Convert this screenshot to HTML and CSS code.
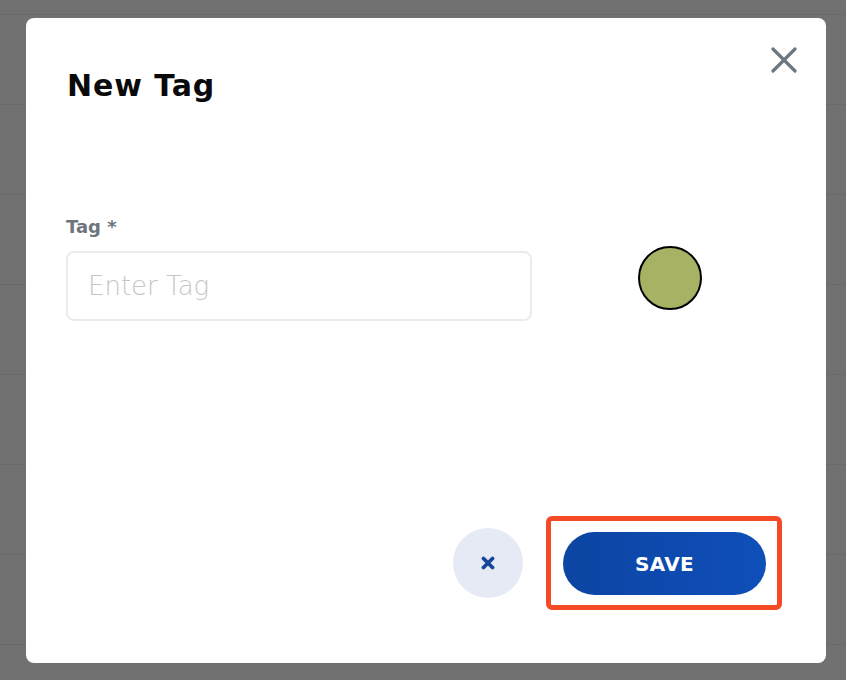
FILE: index.html
```html
<!DOCTYPE html>
<html lang="en">
<head>
<meta charset="utf-8">
<title>New Tag</title>
<link rel="stylesheet" href="styles.css">
</head>
<body>
<div class="backdrop">
  <div class="modal">
    <div class="modal-header">
      <h1 class="modal-title">New Tag</h1>
      <button class="close-btn" aria-label="Close">
        <svg width="26" height="26" viewBox="0 0 26 26"><path d="M2 2 L24 24 M24 2 L2 24" stroke="#6d7780" stroke-width="3.2" stroke-linecap="round" fill="none"/></svg>
      </button>
    </div>
    <div class="form-row">
      <div class="field">
        <label class="field-label">Tag *</label>
        <input class="field-input" type="text" placeholder="Enter Tag">
      </div>
      <div class="swatch"></div>
    </div>
    <div class="modal-footer">
      <button class="cancel-btn" aria-label="Cancel">
        <svg width="14" height="14" viewBox="0 0 14 14"><path d="M2.5 2.5 L11.5 11.5 M11.5 2.5 L2.5 11.5" stroke="#16469a" stroke-width="3.8" stroke-linecap="round" fill="none"/></svg>
      </button>
      <div class="highlight">
        <button class="save-btn">SAVE</button>
      </div>
    </div>
  </div>
</div>
</body>
</html>
```

FILE: styles.css
```css
* { box-sizing: border-box; }
html, body { margin: 0; padding: 0; }
body {
  width: 846px;
  height: 680px;
  overflow: hidden;
  font-family: "DejaVu Sans", "Noto Sans", sans-serif;
  background-color: #717171;
  background-image: repeating-linear-gradient(to bottom, transparent 0, transparent 14px, #6a6a6a 14px, #6a6a6a 15px, transparent 15px, transparent 90px);
}
.backdrop {
  padding: 18px 20px 17px 26px;
}
.modal {
  width: 800px;
  height: 645px;
  background: #ffffff;
  border-radius: 8px;
  display: flex;
  flex-direction: column;
  padding: 0 44px 53px 40px;
}
.modal-header {
  display: flex;
  justify-content: space-between;
  align-items: flex-start;
  height: 85px;
}
.modal-title {
  margin: 51px 0 0 1px;
  font-size: 30px;
  font-weight: 700;
  color: #0a0a0a;
  line-height: 34px;
  letter-spacing: 0.9px;
}
.close-btn {
  margin: 29px -15px 0 0;
  width: 26px;
  height: 26px;
  padding: 0;
  border: 0;
  background: none;
  display: flex;
}
.form-row {
  display: flex;
  align-items: flex-start;
  margin-top: 113px;
}
.field {
  width: 466px;
  display: flex;
  flex-direction: column;
}
.field-label {
  font-size: 18px;
  font-weight: 700;
  color: #6c757d;
  line-height: 22px;
}
.field-input {
  margin-top: 13px;
  height: 70px;
  border: 2px solid #ebebeb;
  border-radius: 8px;
  padding: 0 20px;
  font-family: inherit;
  font-size: 26px;
  font-weight: 300;
  color: #333;
  outline: none;
}
.field-input::placeholder { color: #c6c6c6; }
.swatch {
  margin: 30px 0 0 106px;
  width: 64px;
  height: 64px;
  border-radius: 50%;
  background: #a7b264;
  border: 2px solid #000;
}
.modal-footer {
  margin-top: auto;
  display: flex;
  justify-content: flex-end;
  align-items: center;
  gap: 23px;
}
.cancel-btn {
  width: 70px;
  height: 70px;
  border-radius: 50%;
  border: 0;
  background: #e6eaf5;
  display: flex;
  align-items: center;
  justify-content: center;
  padding: 0;
}
.highlight {
  width: 236px;
  height: 94px;
  border: 5px solid #f44a26;
  border-radius: 6px;
  padding: 11px 11px 10px 12px;
}
.save-btn {
  width: 203px;
  height: 63px;
  border-radius: 32px;
  border: 0;
  background: linear-gradient(90deg, #0c45a2, #0f4fba);
  color: #ffffff;
  font-family: inherit;
  font-weight: 700;
  font-size: 20px;
  letter-spacing: 0.3px;
  display: block;
}
```
